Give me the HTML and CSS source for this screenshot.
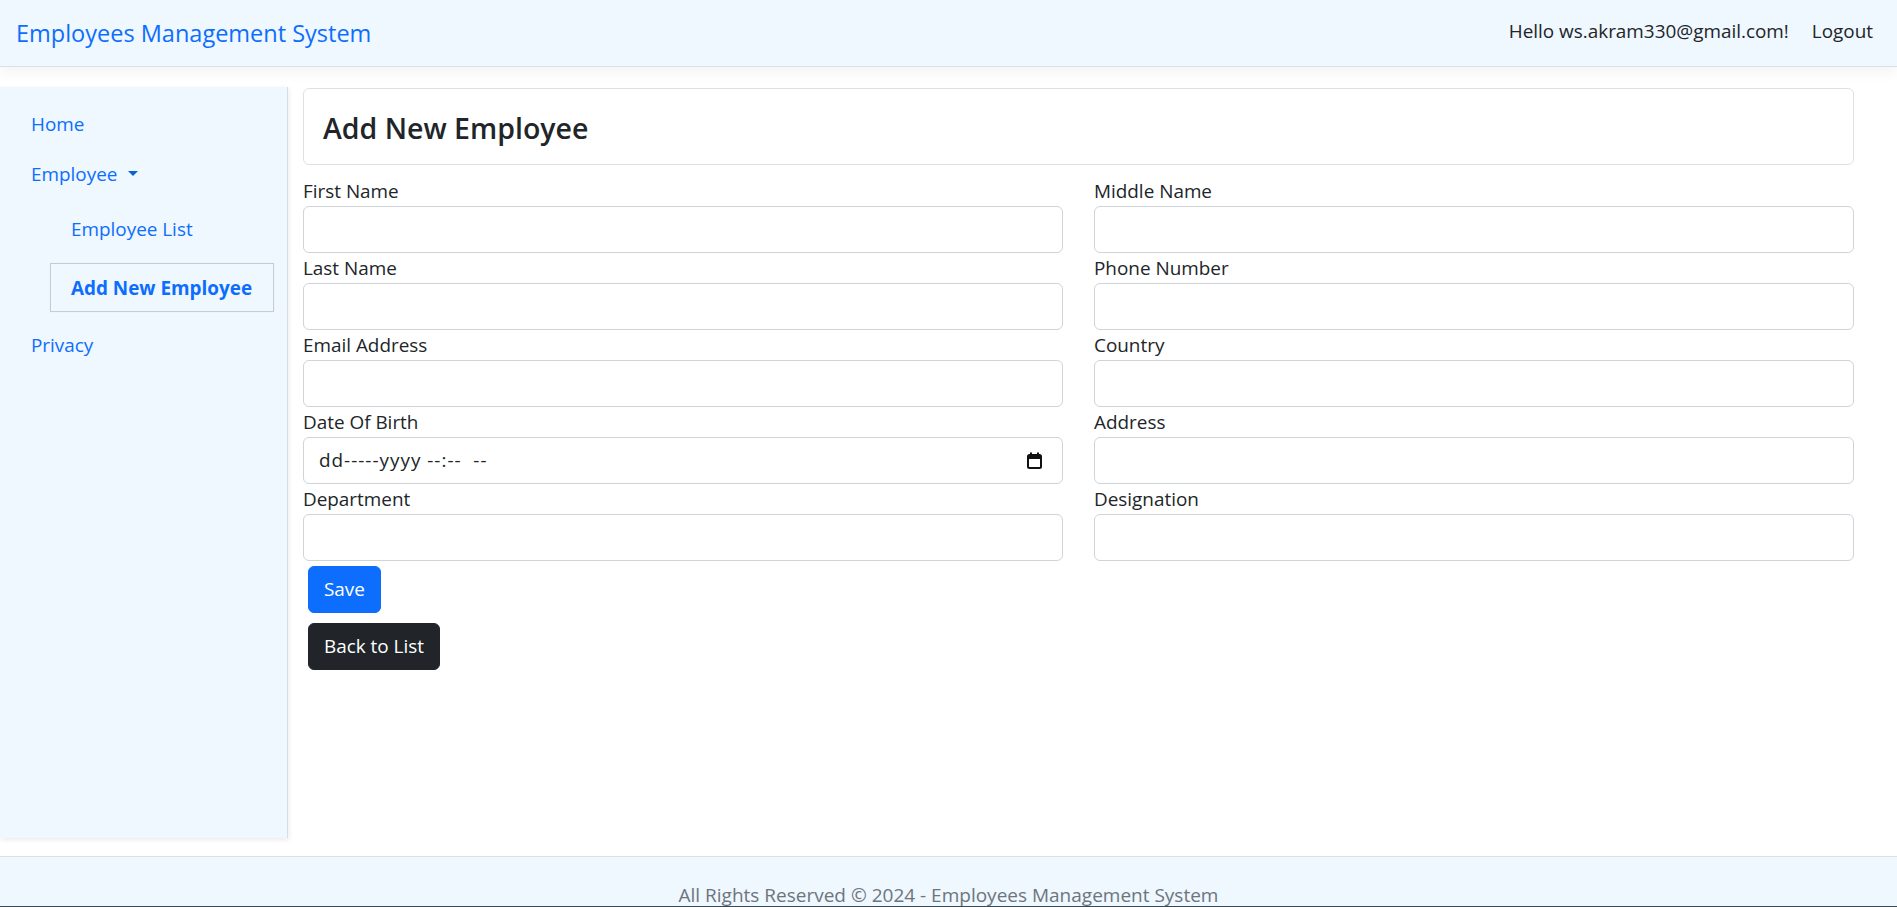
FILE: index.html
```html
<!DOCTYPE html>
<html lang="en">
<head>
<meta charset="utf-8">
<title>Add New Employee - Employees Management System</title>
<link rel="stylesheet" href="styles.css">
</head>
<body>
<header class="navbar">
  <a class="brand" href="#">Employees Management System</a>
  <ul class="nav-right">
    <li class="nav-text">Hello ws.akram330@gmail.com!</li>
    <li><a class="nav-link" href="#">Logout</a></li>
  </ul>
</header>

<div class="layout">
  <aside class="sidebar">
    <ul class="side-nav">
      <li><a class="side-link" href="#">Home</a></li>
      <li>
        <a class="side-link" href="#">Employee<span class="caret"></span></a>
        <ul class="sub-nav">
          <li><a class="sub-link" href="#">Employee List</a></li>
          <li><a class="sub-link active" href="#">Add New Employee</a></li>
        </ul>
      </li>
      <li><a class="side-link" href="#">Privacy</a></li>
    </ul>
  </aside>

  <main class="content">
    <div class="card-head"><h3 class="card-title">Add New Employee</h3></div>
    <form class="form-grid">
      <div class="field"><label class="label">First Name</label><input class="form-control" type="text"></div>
      <div class="field"><label class="label">Middle Name</label><input class="form-control" type="text"></div>
      <div class="field"><label class="label">Last Name</label><input class="form-control" type="text"></div>
      <div class="field"><label class="label">Phone Number</label><input class="form-control" type="text"></div>
      <div class="field"><label class="label">Email Address</label><input class="form-control" type="text"></div>
      <div class="field"><label class="label">Country</label><input class="form-control" type="text"></div>
      <div class="field"><label class="label">Date Of Birth</label>
        <div class="form-control date-control">
          <span class="date-text">dd-----yyyy --:--  --</span>
          <svg class="cal-icon" width="15" height="17" viewBox="0 0 15 17" aria-hidden="true">
            <rect x="3" y="0.5" width="2" height="3" fill="#111"/>
            <rect x="10" y="0.5" width="2" height="3" fill="#111"/>
            <rect x="1" y="3" width="13" height="13" rx="1.5" fill="none" stroke="#111" stroke-width="2"/>
            <rect x="1" y="3" width="13" height="4" fill="#111"/>
          </svg>
        </div>
      </div>
      <div class="field"><label class="label">Address</label><input class="form-control" type="text"></div>
      <div class="field"><label class="label">Department</label><input class="form-control" type="text"></div>
      <div class="field"><label class="label">Designation</label><input class="form-control" type="text"></div>
    </form>
    <div class="actions">
      <button class="btn btn-primary" type="button">Save</button>
      <button class="btn btn-dark" type="button">Back to List</button>
    </div>
  </main>
</div>

<footer class="footer">
  <span class="footer-text">All Rights Reserved © 2024 - Employees Management System</span>
</footer>
<div class="window-edge"></div>
</body>
</html>
```
FILE: styles.css
```css
* { box-sizing: border-box; }

html, body {
  margin: 0;
  padding: 0;
}

body {
  font-family: "Open Sans", "Noto Sans", sans-serif;
  font-size: 18.9px;
  line-height: 28.5px;
  color: #212529;
  background: #fff;
  overflow: hidden;
}

a { text-decoration: none; }

ul { list-style: none; margin: 0; padding: 0; }

/* ---------- navbar ---------- */
.navbar {
  position: relative;
  z-index: 2;
  height: 67px;
  display: flex;
  align-items: center;
  justify-content: space-between;
  padding: 0 24px 0 16px;
  background: #eff7ff;
  border-bottom: 1px solid #d9e0e8;
  box-shadow: 0 5px 14px rgba(0, 0, 0, 0.05);
}

.brand {
  font-size: 23.5px;
  line-height: 36px;
  color: #0d6efd;
  padding-bottom: 1px;
}

.nav-right {
  display: flex;
  gap: 23px;
  padding-bottom: 4px;
}

.nav-text, .nav-link { color: #212529; }

/* ---------- layout ---------- */
.layout {
  display: flex;
  align-items: flex-start;
  margin-top: 20px;
  height: 751px;
}

.sidebar {
  flex: 0 0 288px;
  height: 751px;
  background: #eff7ff;
  border-right: 1px solid #d8dde3;
  box-shadow: 1px 2px 5px rgba(0, 0, 0, 0.08);
  padding-top: 12px;
}

.side-link {
  display: block;
  padding: 10px 31px;
  line-height: 30px;
  color: #0d6efd;
}

.caret {
  display: inline-block;
  margin-left: 11px;
  vertical-align: 0.255em;
  border-top: 0.3em solid #0b63d0;
  border-left: 0.3em solid transparent;
  border-right: 0.3em solid transparent;
}

.sub-nav {
  display: flex;
  flex-direction: column;
  gap: 10px;
  padding: 5px 0 0 50px;
  margin-bottom: 8px;
}

.sub-link {
  display: block;
  width: 224px;
  padding: 8.5px 20px;
  line-height: 30px;
  border: 1px solid transparent;
  color: #0d6efd;
}

.sub-link.active {
  font-weight: 700;
  border-color: #c6ccd3;
  box-shadow: 0 0 1px rgba(0, 0, 0, 0.08);
}

/* ---------- content ---------- */
.content {
  flex: 1;
  padding: 1px 43px 0 15px;
}

.card-head {
  border: 1px solid #dde1e5;
  border-radius: 6px;
  padding: 22px 19px 18px;
}

.card-title {
  margin: 0;
  font-size: 28.5px;
  font-weight: 600;
  line-height: 34.6px;
}

.form-grid {
  display: grid;
  grid-template-columns: 1fr 1fr;
  column-gap: 31px;
  margin-top: 11px;
}

.label {
  display: block;
  line-height: 30.5px;
}

.form-control {
  display: block;
  width: 100%;
  height: 46.5px;
  padding: 0 15px;
  font: inherit;
  color: #212529;
  background: #fff;
  border: 1px solid #ced4da;
  border-radius: 6px;
  outline: none;
}

.date-control {
  display: flex;
  align-items: center;
  justify-content: space-between;
  padding-right: 20px;
}

.date-text {
  white-space: pre;
  letter-spacing: 1px;
}

.cal-icon { display: block; }

.actions {
  display: flex;
  flex-direction: column;
  align-items: flex-start;
  gap: 10px;
  margin: 5px 0 0 5px;
}

.btn {
  font: inherit;
  line-height: 28.5px;
  padding: 8.25px 15px;
  border: 1px solid transparent;
  border-radius: 6px;
  color: #fff;
  cursor: pointer;
}

.btn-primary { background: #0d6efd; border-color: #0d6efd; }
.btn-dark { background: #212529; border-color: #212529; }

/* ---------- footer ---------- */
.footer {
  margin-top: 18px;
  height: 90px;
  background: #eff7ff;
  border-top: 1px solid #dbe0e5;
  padding-top: 24px;
  text-align: center;
}

.footer-text {
  font-size: 19px;
  color: #6c757d;
  white-space: nowrap;
}

.window-edge {
  position: fixed;
  left: 0;
  right: 0;
  bottom: 0;
  height: 1px;
  background: #3a4a55;
}
```
